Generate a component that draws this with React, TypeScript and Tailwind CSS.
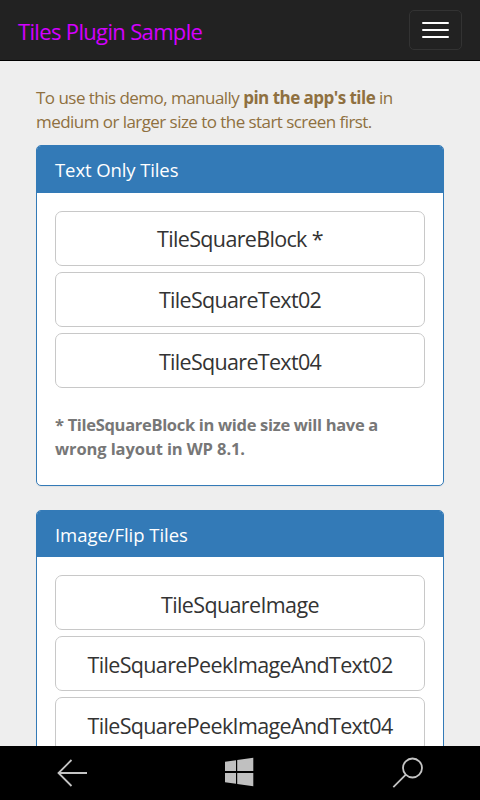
import React from "react";

function TileButton({ label, className }: { label: string; className: string }) {
  return (
    <button className="flex h-[55px] w-full shrink-0 items-center justify-center rounded-[7px] border border-[#c8c8c8] bg-white text-[21.5px] leading-[30px] whitespace-nowrap text-[#333]">
      <span className={className}>{label}</span>
    </button>
  );
}

function Panel({ title, head, children }: { title: string; head: string; children: React.ReactNode }) {
  return (
    <section className="shrink-0 overflow-hidden rounded-[5px] border border-[#337ab7] bg-white shadow-[0_1px_1px_rgba(0,0,0,0.05)]">
      <h2 className={`flex items-center bg-[#337ab7] px-[18px] text-[18.5px] leading-6 whitespace-nowrap text-white ${head}`}>
        {title}
      </h2>
      <div className="flex flex-col gap-1.5 px-[18px] pt-[18px] pb-6">{children}</div>
    </section>
  );
}

export default function App() {
  return (
    <div className="flex h-[800px] w-[480px] flex-col overflow-hidden bg-[#eee] font-['Open_Sans','Noto_Sans',sans-serif]">
      <header className="flex h-[61px] shrink-0 items-center justify-between border-b border-black bg-[#222] pr-[18px] pl-[18px]">
        <span className="pt-px text-[22px] leading-[30px] tracking-[-0.66px] whitespace-nowrap text-[#d400ff]">Tiles Plugin Sample</span>
        <button aria-label="Menu" className="flex h-10 w-[53px] flex-col items-center justify-center gap-[5px] rounded-[5px] border border-[#333]">
          <span className="h-0.5 w-[27px] rounded-[1px] bg-white" />
          <span className="h-0.5 w-[27px] rounded-[1px] bg-white" />
          <span className="h-0.5 w-[27px] rounded-[1px] bg-white" />
        </button>
      </header>
      <main className="flex min-h-0 flex-1 flex-col overflow-hidden px-9 pt-[25px]">
        <p className="mb-[11px] shrink-0 text-[17px] leading-6 whitespace-nowrap text-[#8f7040]">
          <span className="block tracking-[-0.53px]">
            To use this demo, manually <b>pin the app's tile</b> in
          </span>
          <span className="block tracking-[-0.55px]">medium or larger size to the start screen first.</span>
        </p>
        <Panel title="Text Only Tiles" head="h-[47px] tracking-[-0.1px]">
          <TileButton label="TileSquareBlock *" className="tracking-[-0.66px]" />
          <TileButton label="TileSquareText02" className="tracking-[-0.68px]" />
          <TileButton label="TileSquareText04" className="pt-0.5 tracking-[-0.68px]" />
          <p className="mt-[19px] text-[16.5px] leading-6 font-bold whitespace-nowrap text-[#777]">
            <span className="block tracking-[-0.32px]">* TileSquareBlock in wide size will have a</span>
            <span className="block tracking-[-0.1px]">wrong layout in WP 8.1.</span>
          </p>
        </Panel>
        <div className="h-6 shrink-0" />
        <Panel title="Image/Flip Tiles" head="h-[46px] pt-px tracking-[-0.05px]">
          <TileButton label="TileSquareImage" className="pt-1 tracking-[-0.63px]" />
          <TileButton label="TileSquarePeekImageAndText02" className="pt-0.5 tracking-[-0.64px]" />
          <TileButton label="TileSquarePeekImageAndText04" className="pt-0.5 tracking-[-0.64px]" />
        </Panel>
      </main>
      <footer className="flex h-[54px] shrink-0 items-start justify-between bg-black px-[57px] pt-[11px]">
        <svg width="31" height="31" viewBox="0 0 31 31" fill="none" stroke="#c4c4c4" strokeWidth="1.8">
          <path d="M30 16H2M14.5 3L1.5 16L14.5 29" />
        </svg>
        <svg className="-ml-0.5" width="30" height="31" viewBox="0 0 30 31" fill="#c0c0c0">
          <path d="M1 4.8L12 3.3V14H1ZM13.2 3L29.3 .8V14H13.2ZM1 16H12V26.8L1 25.3ZM13.2 16H29.3V29.2L13.2 27Z" />
        </svg>
        <svg width="31" height="32" viewBox="0 0 31 32" fill="none" stroke="#c4c4c4" strokeWidth="1.8">
          <circle cx="20.5" cy="11" r="9.5" />
          <path d="M13.8 17.7L1.3 30.2" />
        </svg>
      </footer>
    </div>
  );
}
